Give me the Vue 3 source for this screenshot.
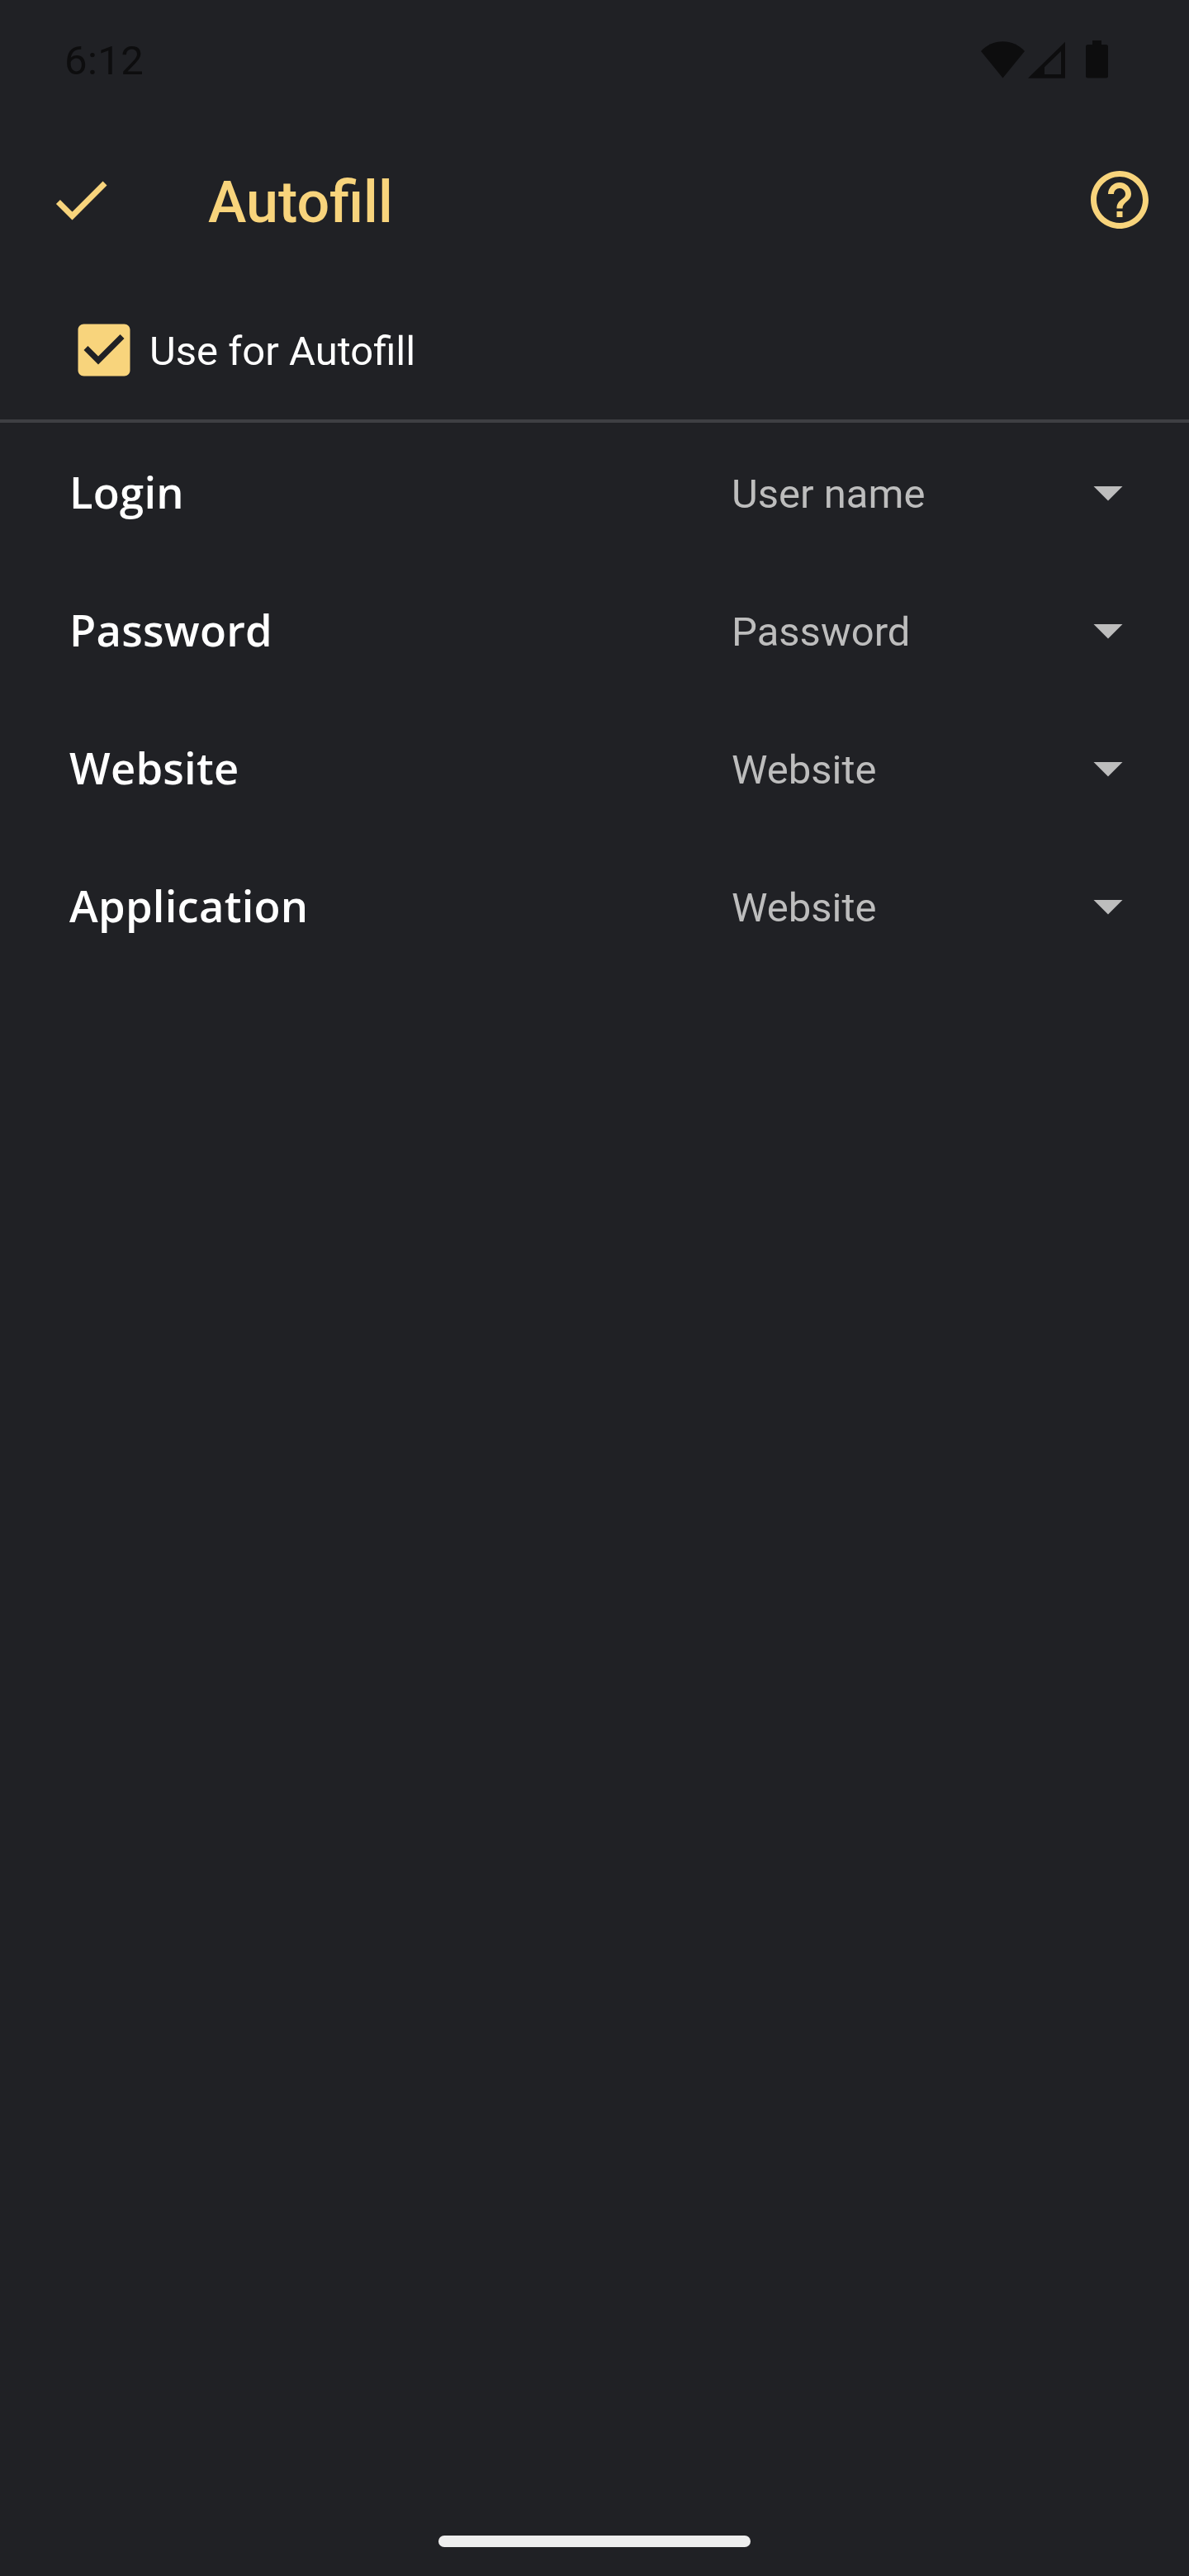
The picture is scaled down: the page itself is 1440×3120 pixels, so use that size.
<template>
  <div class="screen">
    <!-- Status bar -->
    <div class="status-bar">
      <span class="clock">6:12</span>
      <div class="status-icons">
        <svg class="wifi" viewBox="0 0 53 45" width="53" height="45">
          <path d="M26.5 44.6L0 12C7 4.4 16 0.2 26.5 0.2S46 4.4 53 12z" />
        </svg>
        <svg class="signal" viewBox="0 0 45 45" width="45" height="45">
          <path fill-rule="evenodd" d="M0 44.7L45 0.7V44.7zM40 12L20 31.3V40H40z" />
        </svg>
        <svg class="battery" viewBox="0 0 27 46" width="27" height="46">
          <path d="M8 0H19V5H24.5Q27 5 27 7.5V43Q27 45.5 24.5 45.5H2.5Q0 45.5 0 43V7.5Q0 5 2.5 5H8z" />
        </svg>
      </div>
    </div>

    <!-- Toolbar -->
    <header class="toolbar">
      <button type="button" class="icon-button" aria-label="Done">
        <svg viewBox="0 0 24 24" width="84" height="84">
          <path d="M9 16.17L4.83 12l-1.42 1.41L9 19 21 7l-1.41-1.41z" />
        </svg>
      </button>
      <h1 class="title">Autofill</h1>
      <button type="button" class="icon-button" aria-label="Help">
        <svg viewBox="0 0 24 24" width="84" height="84">
          <path d="M11 18h2v-2h-2v2zm1-16C6.48 2 2 6.48 2 12s4.48 10 10 10 10-4.48 10-10S17.52 2 12 2zm0 18c-4.41 0-8-3.59-8-8s3.59-8 8-8 8 3.59 8 8-3.59 8-8 8zm0-14c-2.21 0-4 1.79-4 4h2c0-1.1.9-2 2-2s2 .9 2 2c0 2-3 1.75-3 5h2c0-2.25 3-2.5 3-5 0-2.21-1.79-4-4-4z" />
        </svg>
      </button>
    </header>

    <div class="use-autofill" role="checkbox" :aria-checked="enabled" @click="enabled = !enabled">
      <svg viewBox="0 0 24 24" width="84" height="84">
        <path v-if="enabled" d="M19 3H5c-1.11 0-2 .9-2 2v14c0 1.1.89 2 2 2h14c1.11 0 2-.9 2-2V5c0-1.1-.89-2-2-2zm-9 14l-5-5 1.41-1.41L10 14.17l7.59-7.59L19 8l-9 9z" />
        <path v-else d="M19 5v14H5V5h14m0-2H5c-1.1 0-2 .9-2 2v14c0 1.1.9 2 2 2h14c1.1 0 2-.9 2-2V5c0-1.1-.9-2-2-2z" />
      </svg>
      <span>Use for Autofill</span>
    </div>

    <!-- Field mapping -->
    <main class="fields">
      <div v-for="field in fields" :key="field.label" class="field-row">
        <span class="field-label">{{ field.label }}</span>
        <div class="spinner">
          <span class="spinner-value">{{ field.value }}</span>
          <svg viewBox="0 0 24 24" width="84" height="84">
            <path d="M7 10l5 5 5-5z" />
          </svg>
        </div>
      </div>
    </main>

    <div class="nav-bar">
      <div class="nav-handle"></div>
    </div>
  </div>
</template>

<script setup>
import { ref } from 'vue'

const enabled = ref(true)

const fields = ref([
  { label: 'Login', value: 'User name' },
  { label: 'Password', value: 'Password' },
  { label: 'Website', value: 'Website' },
  { label: 'Application', value: 'Website' }
])
</script>

<style>
body {
  margin: 0;
  background: #202125;
}
</style>

<style scoped>
* {
  box-sizing: border-box;
}

.screen {
  display: flex;
  flex-direction: column;
  width: 1440px;
  height: 3120px;
  background: #202125;
  color: #ffffff;
  font-family: Roboto, sans-serif;
  font-size: 49px;
  overflow: hidden;
}

svg {
  display: block;
  flex: none;
  fill: currentColor;
}

/* Status bar */
.status-bar {
  display: flex;
  justify-content: space-between;
  height: 144px;
  padding: 0 98px 0 78px;
  color: #0d0d0e;
}

.clock {
  line-height: 58px;
  padding-top: 45px;
  letter-spacing: 0.4px;
}

.status-icons {
  display: flex;
  align-items: flex-start;
  padding-top: 49px;
}

.wifi {
  margin: 1px 4px 0 0;
}

.signal {
  margin: 1px 25px 0 0;
}

/* Toolbar */
.toolbar {
  display: flex;
  align-items: center;
  height: 196px;
  padding: 0 42px 0 56px;
  color: #f8d47c;
}

.icon-button {
  padding: 0;
  border: none;
  background: none;
  color: inherit;
  cursor: pointer;
}

.title {
  flex: 1;
  margin: 0 0 0 112px;
  font-size: 70px;
  font-weight: 500;
  line-height: 82px;
  padding-top: 6px;
}

/* Checkbox */
.use-autofill {
  display: flex;
  align-items: center;
  gap: 13px;
  height: 172px;
  padding: 0 84px;
  border-bottom: 4px solid #3e3f43;
  cursor: pointer;
}

.use-autofill svg {
  color: #f8d47c;
}

.use-autofill span {
  line-height: 58px;
  padding-top: 4px;
}

/* Fields */
.fields {
  flex: 1;
}

.field-row {
  display: flex;
  align-items: center;
  height: 167px;
  padding: 1px 56px 0 84px;
}

.field-label {
  flex: 1;
  font-family: 'Open Sans', 'Noto Sans', sans-serif;
  font-size: 52.5px;
  font-weight: 600;
  line-height: 72px;
  letter-spacing: 0.25px;
}

.spinner {
  display: flex;
  align-items: center;
  justify-content: space-between;
  width: 499px;
  padding-left: 1px;
  color: #bdbdbd;
}

.spinner-value {
  line-height: 58px;
  padding-top: 5px;
}

/* Navigation */
.nav-bar {
  display: flex;
  justify-content: center;
  height: 49px;
}

.nav-handle {
  width: 378px;
  height: 14px;
  border-radius: 7px;
  background: #eeeeee;
}
</style>
